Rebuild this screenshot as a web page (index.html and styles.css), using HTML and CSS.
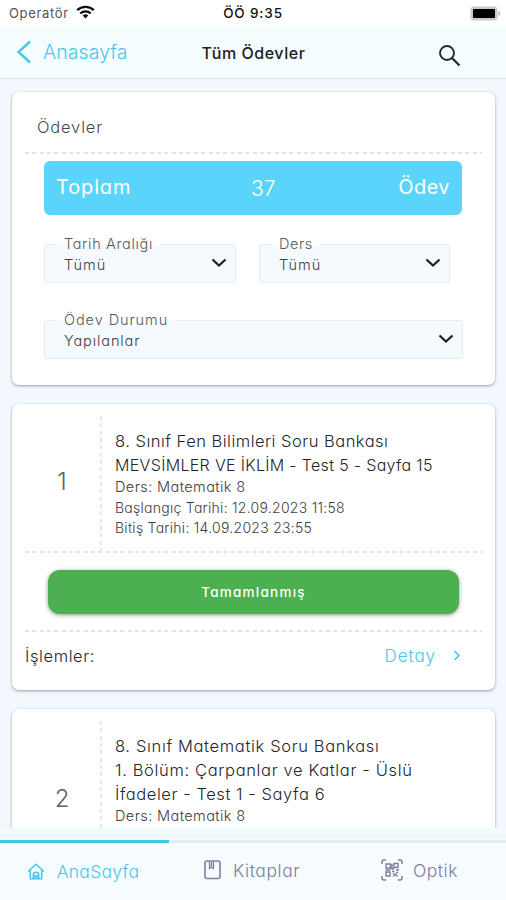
FILE: index.html
```
<!DOCTYPE html>
<html lang="tr">
<head>
<meta charset="utf-8">
<meta name="viewport" content="width=device-width">
<title>Tüm Ödevler</title>
<link rel="stylesheet" href="styles.css">
</head>
<body>
<div class="app">
  <div class="status">
    <div class="carrier"><span>Operatör</span>
      <svg width="19" height="14" viewBox="0 0 19 14" fill="none" stroke="#111" stroke-width="2.3"><path d="M1.2 5.2a12 12 0 0 1 16.6 0M4.3 8.5a7.6 7.6 0 0 1 10.4 0"/><path d="M9.5 13.4 6.7 10.6a4 4 0 0 1 5.6 0z" fill="#111" stroke="none"/></svg>
    </div>
    <div class="clock">ÖÖ 9:35</div>
    <svg class="battery" width="31" height="15" viewBox="0 0 31 15"><rect x=".5" y=".5" width="27" height="14" rx="3.5" fill="#c9c9c9"/><path d="M28.5 5v5c2-.8 2-4.200 0-5z" fill="#aaa"/><rect x="3" y="3" width="22" height="9" rx="1" fill="#000"/></svg>
  </div>

  <header class="header">
    <a class="back"><svg width="16" height="24" viewBox="0 0 16 24" fill="none" stroke="#45c8ed" stroke-width="2.4"><path d="M14 1.500 2.500 12 14 22.500"/></svg><span>Anasayfa</span></a>
    <h1 class="title">Tüm Ödevler</h1>
    <svg class="search" width="23" height="23" viewBox="0 0 23 23" fill="none" stroke="#252a30" stroke-width="1.900"><circle cx="9" cy="9" r="7"/><path d="m14 14 7.500 7.500" stroke-width="2.300"/></svg>
  </header>

  <main class="content">
    <section class="card filters">
      <h2 class="card-title">Ödevler</h2>
      <div class="rule"></div>
      <div class="total"><span class="total-label">Toplam</span><span class="total-count">37</span><span class="total-unit">Ödev</span></div>
      <div class="fields">
        <div class="field"><span class="label label-date">Tarih Aralığı</span><span class="value all">Tümü</span><svg class="chev" width="16" height="10" viewBox="0 0 16 10"><path d="m1.500 1.500 6.500 6 6.500-6"/></svg></div>
        <div class="field"><span class="label label-lesson">Ders</span><span class="value all">Tümü</span><svg class="chev" width="16" height="10" viewBox="0 0 16 10"><path d="m1.500 1.500 6.500 6 6.500-6"/></svg></div>
        <div class="field wide"><span class="label label-state">Ödev Durumu</span><span class="value done">Yapılanlar</span><svg class="chev" width="16" height="10" viewBox="0 0 16 10"><path d="m1.500 1.500 6.500 6 6.500-6"/></svg></div>
      </div>
    </section>

    <section class="card task">
      <div class="task-main">
        <div class="num">1</div>
        <div class="info">
          <p class="book book-a">8. Sınıf Fen Bilimleri Soru Bankası</p>
          <p class="book unit-a">MEVSİMLER VE İKLİM - Test 5 - Sayfa 15</p>
          <p class="meta lesson">Ders: Matematik 8</p>
          <p class="meta date">Başlangıç Tarihi: 12.09.2023 11:58</p>
          <p class="meta date">Bitiş Tarihi: 14.09.2023 23:55</p>
        </div>
      </div>
      <div class="rule"></div>
      <div class="badge">Tamamlanmış</div>
      <div class="rule"></div>
      <div class="actions"><span class="actions-label">İşlemler:</span><a class="detail"><span>Detay</span><svg width="8" height="11" viewBox="0 0 8 11" fill="none" stroke="#45c8ed" stroke-width="1.700"><path d="m1.500 1 4.500 4.500-4.500 4.500"/></svg></a></div>
    </section>

    <section class="card task">
      <div class="task-main tall">
        <div class="num">2</div>
        <div class="info">
          <p class="book book-b">8. Sınıf Matematik Soru Bankası</p>
          <p class="book book-b">1. Bölüm: Çarpanlar ve Katlar - Üslü</p>
          <p class="book unit-b">İfadeler - Test 1 - Sayfa 6</p>
          <p class="meta lesson">Ders: Matematik 8</p>
        </div>
      </div>
    </section>
  </main>

  <nav class="tabs">
    <a class="tab active"><svg width="18" height="17" viewBox="0 0 18 17" fill="none" stroke="#45c8ed" stroke-width="1.500"><path d="M1 8.500 9 1.300l8 7.200M3.300 7v8.700h11.400V7"/><path d="M6.300 15.500V12a2.700 2.700 0 0 1 5.400 0v3.500M8 15.200v-2.500h2v2.500"/></svg><span>AnaSayfa</span></a>
    <a class="tab books"><svg width="17" height="20" viewBox="0 0 17 20" fill="none" stroke="#7d7f9b" stroke-width="1.600"><rect x="1" y="1" width="15" height="17.500" rx="2"/><path d="M5.500 1.500v7l2-1.600 2 1.600v-7M7.500 2v4" stroke-width="1.300"/></svg><span>Kitaplar</span></a>
    <a class="tab optic"><svg width="22" height="22" viewBox="0 0 22 22" fill="none" stroke="#7d7f9b" stroke-width="1.500"><path d="M1 5V3q0-2 2-2h2M17 1h2q2 0 2 2v2M21 17v2q0 2-2 2h-2M5 21H3q-2 0-2-2v-2"/><path d="M5 5h4.500v4H5zM13 4.500h4v4h-4zM5 13h4v4H5zM11 5v5h2M4.500 11h5M11 12.500h2.500M15 11h3M12 14.500l5 3M17 13l-5 4.500" stroke-width="1.400"/></svg><span>Optik</span></a>
  </nav>
</div>
</body>
</html>
```
FILE: styles.css
```
* { box-sizing: border-box; }
body {
  margin: 0;
  background: #f3f8fe;
  color: #22262a;
  font-family: Inter, "Noto Sans", sans-serif;
  font-weight: 300;
  font-feature-settings: "cv11";
}
h1, h2, p { margin: 0; font-weight: inherit; }
svg { display: block; flex: none; }
.app { display: flex; flex-direction: column; height: 900px; overflow: hidden; }

.status, .header { display: grid; align-items: center; font-feature-settings: normal; }
.status { height: 26px; flex: none; background: #fff; grid-template-columns: 1fr auto 1fr; padding: 0 5px 0 9px; }
.carrier { display: flex; align-items: center; gap: 7px; font-size: 13px; letter-spacing: .65px; font-weight: 400; color: #555; }
.carrier svg { margin-top: -2px; }
.clock { font-size: 13.5px; font-weight: 500; letter-spacing: .85px; color: #111; margin-right: 4px; }
.battery { justify-self: end; }

.header { height: 53px; flex: none; background: #f6fdff; border-bottom: 1px solid #d7e2e9; grid-template-columns: 1fr auto 1fr; padding: 0 45px 0 16px; }
.back { display: flex; align-items: center; gap: 11px; color: #45c8ed; font-size: 19.5px; letter-spacing: .08px; }
.title { font-size: 16px; font-weight: 500; letter-spacing: .55px; color: #1c2024; margin: 2px 0 0 30px; }
.search { justify-self: end; margin-top: 6px; }

.content { height: 749px; flex: none; overflow: hidden; padding: 13px 11px 0 12px; display: flex; flex-direction: column; gap: 19px; }
.card { flex: none; background: #fff; border-radius: 7px; padding: 0 13px; box-shadow: 0 1px 3px rgba(70, 80, 90, .55); }
.rule { height: 2px; background: repeating-linear-gradient(90deg, #e0e5e5 0 4px, #fff 4px 7.340px); }

.filters { height: 293px; }
.card-title { height: 60px; padding: 3px 12px 0; line-height: 65px; font-size: 16.5px; letter-spacing: .8px; color: #44484c; }
.total { margin: 7px 20px 0 19px; height: 54px; padding: 0 12px; border-radius: 6px; background: #5ad4fb; color: #fff; display: grid; grid-template-columns: 195px auto 1fr; align-items: center; font-size: 20px; font-weight: 300; padding-bottom: 3px; }
.total-label { letter-spacing: .85px; font-weight: 400; }
.total-count { font-size: 21px; padding-top: 3px; }
.total-unit { justify-self: end; letter-spacing: .4px; font-weight: 400; }
.fields { margin: 29px 20px 0 19px; display: grid; grid-template-columns: 192px 191px; column-gap: 23px; row-gap: 36px; }
.field { position: relative; height: 39px; margin-bottom: 1px; border: 1px solid #e2edf1; border-radius: 3px; background: #f5fafe; display: flex; align-items: center; justify-content: space-between; padding: 2px 9px 0 19px; font-size: 14.5px; color: #3c4044; }
.wide { grid-column: 1 / -1; width: 419px; }
.label { position: absolute; left: 12px; top: -11px; line-height: 19px; padding: 0 7px; background: linear-gradient(#fff 11px, #f5fafe 11px); color: #55595e; }
.label-date { letter-spacing: .65px; }
.label-lesson { letter-spacing: .55px; }
.label-state { letter-spacing: .93px; }
.all { letter-spacing: 1px; }
.done { letter-spacing: .9px; }
.chev { fill: none; stroke: #1a1e22; stroke-width: 2.2; margin: -4px -1px 0 0; }

.task { height: 286px; padding-top: 12px; }
.task-main { display: grid; grid-template-columns: 77px 1fr; height: 135px; }
.tall { height: 156px; }
.num { display: flex; align-items: center; justify-content: center; font-size: 24px; color: #5c6064; padding: 0 3px 4px 0; background: repeating-linear-gradient(#e2e8e8 0 4px, #fff 4px 7.340px) right / 2px 100% no-repeat; }
.tall .num { padding-bottom: 1px; }
.info { padding: 13px 0 0 13px; white-space: nowrap; }
.book { font-size: 16.5px; line-height: 24px; }
.book-a { letter-spacing: .49px; }
.unit-a { font-size: 16px; letter-spacing: .33px; }
.book-b { letter-spacing: .65px; }
.unit-b { letter-spacing: .57px; }
.meta { font-size: 14px; line-height: 20.5px; color: #3c4044; }
.lesson { font-size: 14.5px; letter-spacing: .4px; }
.date { letter-spacing: .27px; }
.badge { margin: 17px 23px 16px; height: 44px; border-radius: 12px; background: #4caf50; color: #fff; font-size: 13.5px; font-weight: 500; letter-spacing: 1.25px; display: flex; align-items: center; justify-content: center; box-shadow: 0 1px 4px rgba(60, 80, 70, .6); }
.actions { height: 47px; display: flex; align-items: center; justify-content: space-between; padding-right: 21px; font-size: 16.5px; }
.actions-label { letter-spacing: .6px; }
.detail { display: flex; align-items: center; gap: 17px; color: #45c8ed; font-size: 17px; letter-spacing: .95px; }

.tabs { position: relative; flex: 1; background: #f6fcff; padding: 14px 0 0; display: grid; grid-template-columns: 169px 168px 169px; border-top: 11px solid #f1fafd; }
.tabs::before { content: ""; position: absolute; left: 0; right: 0; top: 1px; height: 3px; background: linear-gradient(90deg, #48c6e8 169px, #e4edf2 169px); }
.tab { display: flex; align-items: center; justify-content: center; height: 34px; color: #7d7f9b; font-size: 17.500px; letter-spacing: .55px; }
.active { color: #45c8ed; gap: 12px; padding: 3px 3px 0 0; letter-spacing: .3px; }
.books { gap: 12px; padding-right: 2px; }
.optic { gap: 10px; padding-right: 4px; }
```
